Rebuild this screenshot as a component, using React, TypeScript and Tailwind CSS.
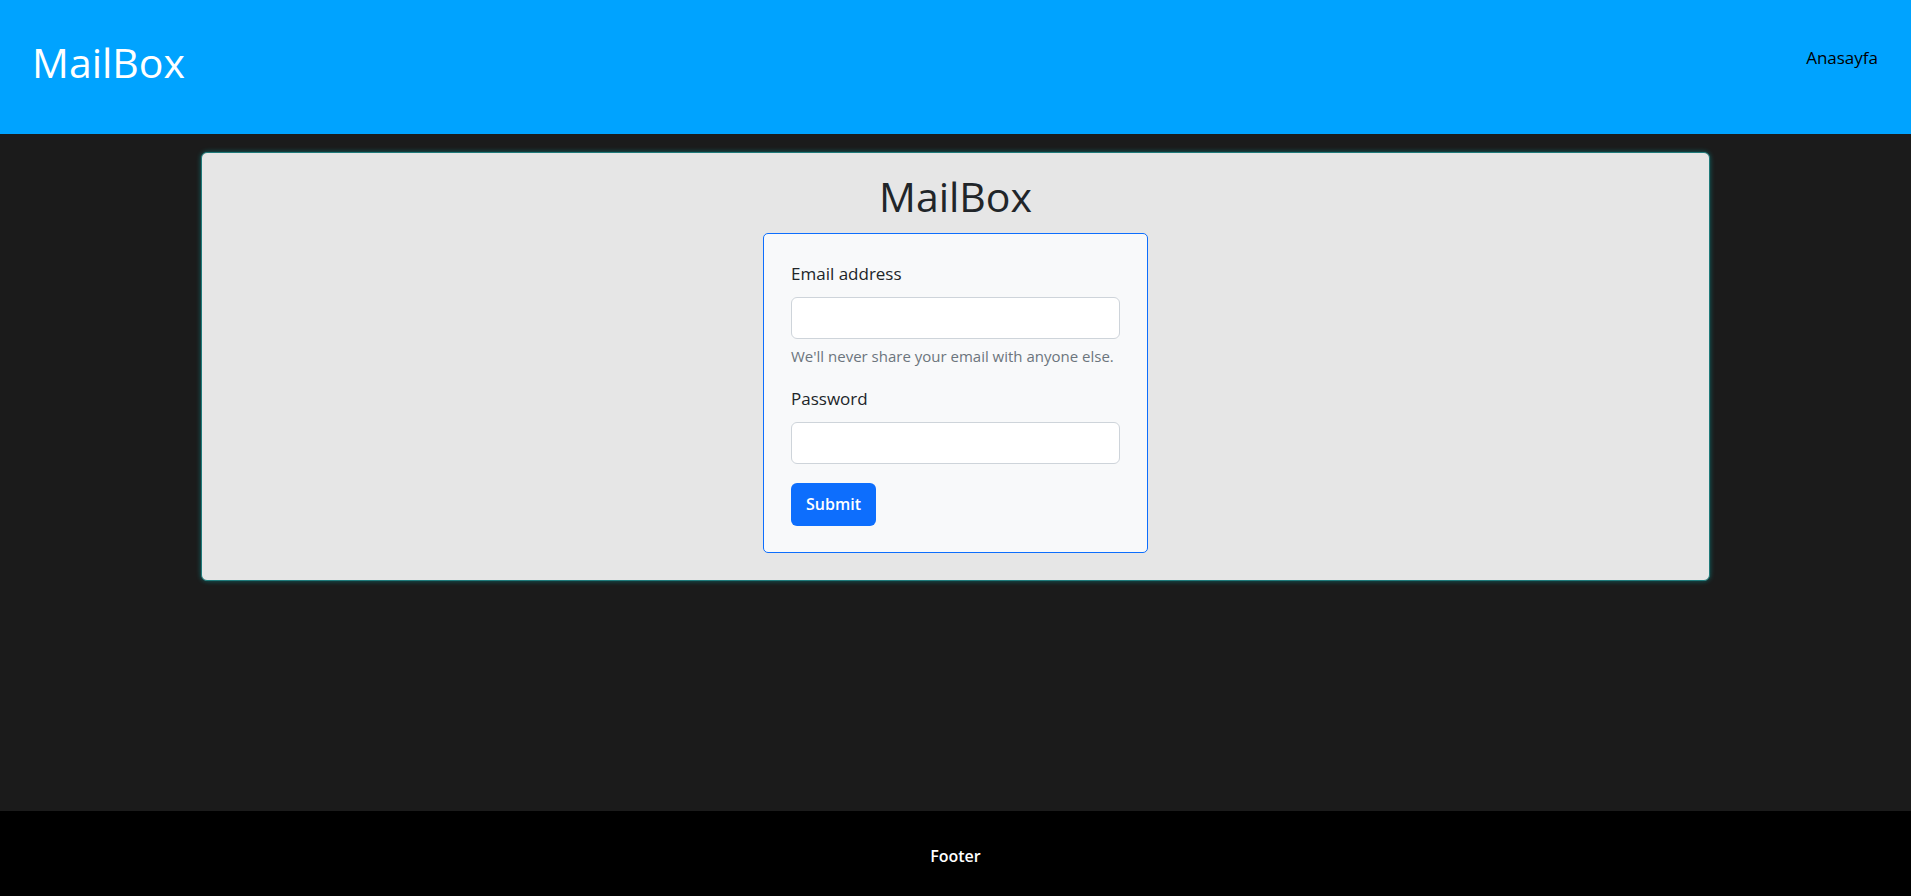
export default function App() {
  return (
    <div className="min-h-screen flex flex-col bg-[#1b1b1b] font-['Open_Sans',sans-serif] text-[#212529]">
      <header className="h-[134px] bg-[#00a3ff] flex items-center justify-between pl-8 pr-[33px] pb-[11px]">
        <h1 className="text-[41px] leading-[48px] text-white">MailBox</h1>
        <a href="#" className="text-[17px] text-black mb-2">
          Anasayfa
        </a>
      </header>

      <main className="flex-1">
        <div className="w-[79%] mx-auto mt-[18px] bg-[#e6e6e6] rounded-[6px] border border-[#1f7a7a] shadow-[0_0_5px_rgba(0,190,190,0.45)] pt-[19px] pb-[27px] flex flex-col items-center">
          <h2 className="text-[41px] leading-[48px] mb-[13px]">MailBox</h2>

          <form
            onSubmit={(e) => e.preventDefault()}
            className="w-[385px] bg-[#f8f9fa] border border-[#0d6efd] rounded-[5px] px-[27px] pt-[27px] pb-[26px] flex flex-col"
          >
            <label className="text-[17px] leading-[25.5px] mb-[10px]">Email address</label>
            <input
              type="email"
              className="h-[42px] w-full bg-white border border-[#ced4da] rounded-[6px] px-3 outline-none"
            />
            <p className="text-[15px] leading-[22.5px] text-[#6c757d] mt-[6px]">
              We'll never share your email with anyone else.
            </p>

            <label className="text-[17px] leading-[25.5px] mt-[19px] mb-[10px]">Password</label>
            <input
              type="password"
              className="h-[42px] w-full bg-white border border-[#ced4da] rounded-[6px] px-3 outline-none"
            />

            <button
              type="submit"
              className="mt-[19px] self-start h-[43px] w-[85px] rounded-[6px] bg-[#0d6efd] text-white text-[16px] font-semibold"
            >
              Submit
            </button>
          </form>
        </div>
      </main>

      <footer className="h-[85px] bg-black flex items-center justify-center">
        <span className="text-white text-[16px] font-semibold mt-1">Footer</span>
      </footer>
    </div>
  );
}
